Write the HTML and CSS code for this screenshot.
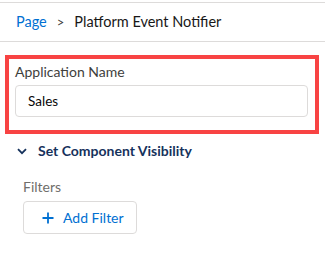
FILE: index.html
```html
<!DOCTYPE html>
<html lang="en">
<head>
  <meta charset="UTF-8">
  <title>Platform Event Notifier</title>
  <link rel="stylesheet" href="styles.css">
</head>
<body>

  <div class="panel">
    <div class="crumbs">
      <a href="#" class="crumb-link">Page</a>
      <span class="crumb-sep">&gt;</span>
      <span class="crumb-current">Platform Event Notifier</span>
    </div>

    <div class="highlight">
      <label class="field-label">Application Name</label>
      <div class="field-input">Sales</div>
    </div>

    <div class="section">
      <div class="section-title">
        <svg class="chevron" width="10" height="7" viewBox="0 0 10 7">
          <path d="M1 1.2 L5 5.2 L9 1.2" fill="none" stroke="#16325c" stroke-width="1.8"/>
        </svg>
        <span>Set Component Visibility</span>
      </div>

      <div class="filters">
        <div class="filters-label">Filters</div>
        <button class="add-filter">
          <svg class="plus" width="12" height="12" viewBox="0 0 12 12">
            <path d="M6 0.5 V11.5 M0.5 6 H11.5" stroke="#0070d2" stroke-width="1.8"/>
          </svg>
          Add Filter
        </button>
      </div>
    </div>
  </div>

</body>
</html>
```

FILE: styles.css
```css
body {
  margin: 0;
  background-color: #fff;
  font-family: Lato, "Open Sans", Arial, sans-serif;
  color: #080707;
}

.panel {
  margin-top: 2px;
  border-top: 1px solid #dddbda;
}

.crumbs {
  display: flex;
  align-items: center;
  padding: 9px 16px;
  line-height: 20px;
  font-size: 14.5px;
  border-bottom: 1px solid #dddbda;
}

.crumb-link {
  color: #0070d2;
  text-decoration: none;
}

.crumb-sep {
  margin: 0 10px;
  font-size: 13px;
  color: #3e3e3c;
}

.crumb-current {
  color: #181818;
}

.highlight {
  margin: 13px 6px 0 5px;
  padding: 4px 7px 13px 6px;
  border: 4px solid #f84343;
}

.field-label {
  display: block;
  font-size: 14px;
  line-height: 18px;
  color: #3e3e3c;
  margin-bottom: 4px;
}

.field-input {
  height: 30px;
  line-height: 30px;
  padding: 0 12px;
  font-size: 13.5px;
  border: 1px solid #dddbda;
  border-radius: 4px;
}

.section {
  padding: 7px 0 0 17px;
}

.section-title {
  display: flex;
  align-items: center;
  gap: 11px;
  font-size: 14px;
  font-weight: 700;
  line-height: 20px;
  color: #16325c;
}

.filters {
  padding: 17px 0 0 6px;
}

.filters-label {
  font-size: 14px;
  line-height: 18px;
  color: #706e6b;
  margin-bottom: 5px;
}

.add-filter {
  display: flex;
  align-items: center;
  gap: 9px;
  width: 114px;
  height: 33px;
  padding: 0 0 0 18px;
  font-family: inherit;
  font-size: 14px;
  color: #0070d2;
  background-color: #fff;
  border: 1px solid #dddbda;
  border-radius: 4px;
}
```
